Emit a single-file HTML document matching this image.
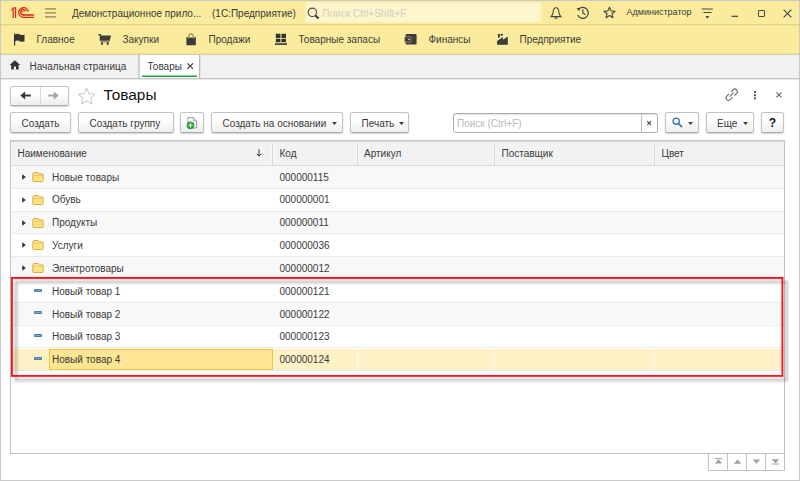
<!DOCTYPE html>
<html lang="ru"><head><meta charset="utf-8"><title>Товары</title>
<style>
*{box-sizing:border-box;margin:0;padding:0}
html,body{width:800px;height:481px;overflow:hidden;background:#fff}
body{font-family:"Liberation Sans",Arial,sans-serif;font-size:10px;color:#3a3a3a;position:relative}
.abs{position:absolute}
svg{position:absolute;overflow:visible}
#frame{position:absolute;left:0;top:0;width:800px;height:481px;border:1px solid #c9c9c9;z-index:50;pointer-events:none}
#top{left:0;top:0;width:800px;height:25px;background:#fbec9d;border-bottom:1px solid #e3d37f}
#sec{left:0;top:25px;width:800px;height:30px;background:#fbec9d;border-top:1px solid #f5e696;border-bottom:1px solid #d9cf98;box-shadow:inset 0 -1px 0 #f2e291}
#tabs{left:0;top:55px;width:800px;height:25px;background:#f1f1f1;border-bottom:1px solid #e6e6e6;box-shadow:inset 0 -1px 0 #c6c6c6}
.t{position:absolute;white-space:nowrap;line-height:14px}
#search{left:304px;top:2px;width:237px;height:20.5px;background:#fdf5cb;border-radius:2px}
.btn{position:absolute;height:21px;border:1px solid #c4c4c4;border-bottom-color:#ababab;border-radius:2.5px;background:linear-gradient(#ffffff 35%,#ededed);box-shadow:0 1px 1.5px rgba(0,0,0,.18)}
.caret{position:absolute;width:0;height:0;border-left:2.5px solid transparent;border-right:2.5px solid transparent;border-top:3px solid #444}
#tbl{left:10px;top:140px;width:775px;height:314px;border:1px solid #c2c2c2;border-top-color:#c8c8c8;background:#fff;overflow:hidden}
.hd{position:absolute;left:0;top:0;width:773px;height:24.5px;background:#f2f2f2;border-top:1px solid #d4d4d4;border-bottom:1px solid #dadada}
.vs{position:absolute;top:2px;width:1px;height:22px;background:#d6d6d6;box-shadow:1px 0 0 #f8f8f8,-1px 0 0 #f8f8f8}
.sep{position:absolute;left:11px;width:773px;height:1px;background:#ebebeb}
.alt{position:absolute;left:11px;width:773px;background:#f8f8f8}
</style></head><body>
<div id="top" class="abs"></div>
<div id="sec" class="abs"></div>
<div id="tabs" class="abs"></div>
<!-- top bar -->
<svg style="left:10px;top:6px" width="25" height="13" viewBox="0 0 25 13"><g fill="none" stroke="#e0251b" stroke-width="1.25"><path d="M1.3 4.3 L3.7 1.75 H5.55 V12.1"/><path d="M3.25 3.4 V12.1"/><path d="M18.36 5.62 A4.85 4.85 0 1 0 13.6 11.4 H24" stroke-width="1.35"/><path d="M16.27 5.16 A2.95 2.7 0 1 0 13.6 9 H24" stroke-width="1.3"/><path d="M14.7 5.7 A1.2 1.2 0 0 0 12.4 6.5" stroke-width="0.8"/></g></svg>
<svg style="left:45px;top:8px" width="11" height="10" viewBox="0 0 11 10"><g stroke="#8a8258" stroke-width="1.3"><path d="M0 0.8H11M0 4.9H11M0 8.8H11"/></g></svg>
<div class="t" style="left:72px;top:6.7px;">Демонстрационное прило...</div>
<div class="t" style="left:212px;top:6.7px;">(1С:Предприятие)</div>
<svg style="left:300px;top:0px" width="245" height="25" viewBox="0 0 245 25"><rect x="5.2" y="2.5" width="236" height="20" rx="2" fill="#fdf5cb"/></svg>
<svg style="left:306.6px;top:6.6px" width="13" height="13" viewBox="0 0 13 13"><circle cx="5.3" cy="5.3" r="4.2" fill="none" stroke="#444" stroke-width="1.1"/><path d="M8.5 8.5 L11.5 11.5" stroke="#333" stroke-width="1.9"/></svg>
<div class="t" style="left:322.3px;top:6.7px;color:#d3cfc0">Поиск Ctrl+Shift+F</div>
<svg style="left:550.2px;top:6.8px" width="12" height="12.5" viewBox="0 0 12 12" preserveAspectRatio="none"><path d="M6 0.7 C3.6 0.7 3.2 3 3.1 5.2 C3 7.2 2 8.2 0.9 9.3 H11.1 C10 8.2 9 7.2 8.9 5.2 C8.8 3 8.4 0.7 6 0.7 Z" fill="none" stroke="#444" stroke-width="1.1" stroke-linejoin="round"/><path d="M4.6 10.6 H7.4" stroke="#444" stroke-width="1.3"/></svg>
<svg style="left:576.1px;top:6.4px" width="13.2" height="13.2" viewBox="0 0 12 12"><path d="M2.2 3.2 A5 5 0 1 1 1.6 8.2" fill="none" stroke="#444" stroke-width="1.1"/><path d="M0.4 2.2 L3.6 1.6 L3 4.8 Z" fill="#444"/><path d="M6.2 3 V6.4 L8.6 8" fill="none" stroke="#444" stroke-width="1.1"/></svg>
<svg style="left:603.3px;top:5.9px" width="13" height="13" viewBox="0 0 24 24"><path d="M12 2.2 L14.9 9 L22.2 9.6 L16.6 14.4 L18.4 21.6 L12 17.7 L5.6 21.6 L7.4 14.4 L1.8 9.6 L9.1 9 Z" fill="none" stroke="#444" stroke-width="2.1" stroke-linejoin="round"/></svg>
<div class="t" style="left:626.5px;top:4.5px;font-size:9px">Администратор</div>
<svg style="left:701px;top:8px" width="13" height="11" viewBox="0 0 13 11"><path d="M0.8 1H11.8M2.4 4.5H10.4" stroke="#444" stroke-width="1.2"/><path d="M4.4 8.2 H8.4 L6.4 10.6 Z" fill="#222"/></svg>
<svg style="left:731px;top:15px" width="8" height="3" viewBox="0 0 8 3"><path d="M0.5 1.3H7" stroke="#444" stroke-width="1.2"/></svg>
<div class="abs" style="left:757.5px;top:9.5px;width:7.5px;height:7.5px;border:1.2px solid #444;border-radius:1px"></div>
<svg style="left:783px;top:9px" width="9" height="9" viewBox="0 0 9 9"><path d="M0.6 0.6 L8.4 8.4 M8.4 0.6 L0.6 8.4" stroke="#444" stroke-width="1.1"/></svg>
<!-- sections -->
<svg style="left:14px;top:33px" width="11" height="13" viewBox="0 0 11 13"><path d="M0.6 0.5 V12.6" stroke="#333" stroke-width="1.2"/><path d="M1 1.5 C3 0.5 4.6 0.7 6 1.5 C7.4 2.3 8.8 2.3 10.5 1.5 V8.2 C8.8 9 7.4 9 6 8.2 C4.6 7.4 3 7.2 1 8.2 Z" fill="#353535"/></svg>
<div class="t" style="left:36.5px;top:32.6px;">Главное</div>
<svg style="left:98px;top:34px" width="13.2" height="11" viewBox="0 0 13.2 11"><path d="M0.3 0.6 H2.2 V2" fill="none" stroke="#3a3a3a" stroke-width="1.2"/><path d="M1.7 1.5 H13 L11.7 6.8 H1.7 Z" fill="#3d3d3d"/><path d="M2.6 7.8 H11.7" stroke="#3d3d3d" stroke-width="0.7"/><path d="M3.1 8.3 H5 V10.7 H3.1 Z M8.8 8.3 H10.7 V10.7 H8.8 Z" fill="#3d3d3d"/></svg>
<div class="t" style="left:122.5px;top:32.6px;">Закупки</div>
<svg style="left:185.5px;top:32.5px" width="10.5" height="12.5" viewBox="0 0 10.5 12.5"><path d="M0.4 3.6 L1.3 4.6 H8.9 L9.8 3.6 V12.2 H0.4 Z" fill="#3a3a3a"/><path d="M2.9 6 V3.2 C2.9 0.1 7.3 0.1 7.3 3.2 V6" fill="none" stroke="#8f8759" stroke-width="1.15"/></svg>
<div class="t" style="left:208.5px;top:32.6px;">Продажи</div>
<svg style="left:275px;top:34px" width="12" height="11" viewBox="0 0 12 11"><path d="M0.8 -0.2 H5.4 V3.9 H0.8 Z M6.4 -0.2 H11 V3.9 H6.4 Z M0.8 4.8 H5.4 V8.3 H0.8 Z M6.4 4.8 H11 V8.3 H6.4 Z" fill="#333"/><path d="M0 10.1 H12" stroke="#333" stroke-width="1.6"/></svg>
<div class="t" style="left:298.5px;top:32.6px;">Товарные запасы</div>
<svg style="left:403.8px;top:34px" width="13" height="11" viewBox="0 0 13 11"><rect x="1.6" y="0" width="11" height="10.6" rx="1.2" fill="#3d3d3d"/><rect x="0.6" y="2.8" width="6.6" height="5.4" rx="1.3" fill="#3d3d3d" stroke="#b5ab6c" stroke-width="0.7"/><circle cx="4.9" cy="5.5" r="0.75" fill="#f4e9b0"/></svg>
<div class="t" style="left:428.5px;top:32.6px;">Финансы</div>
<svg style="left:497px;top:34px" width="11" height="11" viewBox="0 0 11 11"><path d="M0.1 10.7 V6.9 L5.9 3 V5.8 L10.8 2.6 V10.7 Z" fill="#3d3d3d"/><path d="M1 0 H2.8 V2.9 L1 4.1 Z M3.8 0 H6 V0.9 L3.8 2.3 Z" fill="#2e2e2e"/></svg>
<div class="t" style="left:519.5px;top:32.6px;">Предприятие</div>
<!-- tabs -->
<div class="abs" style="left:138px;top:55px;width:2px;height:23px;background:#cfcfcf"></div>
<div class="abs" style="left:140px;top:55px;width:59px;height:23px;background:#fff"></div>
<div class="abs" style="left:199px;top:55px;width:1px;height:23px;background:#b6b6b6"></div>
<div class="abs" style="left:200px;top:55px;width:1px;height:23px;background:#e2e2e2"></div>
<svg style="left:141px;top:74px" width="58" height="5" viewBox="0 0 58 5"><rect x="0.8" y="1.5" width="55.4" height="1.6" rx="0.8" fill="#1f9f44"/></svg>
<svg style="left:8.6px;top:60.4px" width="11.8" height="10" viewBox="0 0 11 10"><path d="M5.5 0.3 L10.8 5 H9.2 V9.6 H6.6 V6.4 H4.4 V9.6 H1.8 V5 H0.2 Z" fill="#333"/></svg>
<div class="t" style="left:29.5px;top:60.4px;">Начальная страница</div>
<div class="t" style="left:147.5px;top:60.4px;">Товары</div>
<svg style="left:186.6px;top:63.3px" width="6.4" height="6.4" viewBox="0 0 6 6"><path d="M0.4 0.4 L5.6 5.6 M5.6 0.4 L0.4 5.6" stroke="#333" stroke-width="1.05"/></svg>
<!-- title row -->
<div class="btn" style="left:10px;top:86px;width:59px;height:19.5px"></div>
<div class="abs" style="left:39.5px;top:87px;width:1px;height:17px;background:#d8d8d8"></div>
<svg style="left:20px;top:91px" width="11" height="9" viewBox="0 0 11 9"><path d="M10.8 4.5 H4" fill="none" stroke="#3a3a3a" stroke-width="2"/><path d="M0.2 4.5 L5.2 0.4 V8.6 Z" fill="#3a3a3a"/></svg>
<svg style="left:48px;top:91px" width="11" height="9" viewBox="0 0 11 9"><path d="M0.2 4.5 H7" fill="none" stroke="#a6a6a6" stroke-width="2"/><path d="M10.8 4.5 L5.8 0.4 V8.6 Z" fill="#a6a6a6"/></svg>
<svg style="left:76.6px;top:86.8px" width="19.4" height="17.8" viewBox="0 0 24 22"><path d="M12 1.2 L14.9 8.2 L22.6 8.8 L16.7 13.7 L18.6 21 L12 17 L5.4 21 L7.3 13.7 L1.4 8.8 L9.1 8.2 Z" fill="#fff" stroke="#bcc3cb" stroke-width="1.2" stroke-linejoin="miter"/></svg>
<div class="t" style="left:103.5px;top:84.6px;font-size:15.4px;line-height:20px;color:#111">Товары</div>
<svg style="left:725.6px;top:89px" width="11.4" height="11.4" viewBox="-6.25 -6.25 12.5 12.5"><g transform="rotate(-45)" fill="none" stroke="#6a6a6a" stroke-width="1.15" stroke-linecap="round"><path d="M-1.8 -2.7 H-4.9 A2.7 2.7 0 0 0 -4.9 2.7 H-1.8"/><path d="M1.8 2.7 H4.9 A2.7 2.7 0 0 0 4.9 -2.7 H1.8"/><path d="M-2.7 0 H2.7"/></g></svg>
<div class="abs" style="left:754px;top:90.5px;width:2px;height:2px;background:#555;box-shadow:0 3.2px 0 #555,0 6.4px 0 #555"></div>
<svg style="left:775.6px;top:91.9px" width="5.8" height="5.8" viewBox="0 0 6 6"><path d="M0.4 0.4 L5.6 5.6 M5.6 0.4 L0.4 5.6" stroke="#666" stroke-width="1.15"/></svg>
<!-- command bar -->
<div class="btn" style="left:10px;top:112px;width:61px"></div>
<div class="t" style="left:21.5px;top:117.2px;">Создать</div>
<div class="btn" style="left:78px;top:112px;width:95.5px"></div>
<div class="t" style="left:89.5px;top:117.2px;">Создать группу</div>
<div class="btn" style="left:180px;top:112px;width:23.5px"></div>
<svg style="left:186.9px;top:117px" width="10.5" height="12" viewBox="0 0 10.5 12"><path d="M0.9 0.6 H6.3 L9.6 3.8 V10.9 H0.9 Z" fill="#fff" stroke="#8593a6" stroke-width="0.9"/><path d="M6.3 0.6 V3.8 H9.6" fill="none" stroke="#8593a6" stroke-width="0.8"/><circle cx="3.5" cy="8.3" r="3.6" fill="#2aa73a" stroke="#1f8f2e" stroke-width="0.5"/><path d="M3.5 6.2 V10.4 M1.4 8.3 H5.6" stroke="#fff" stroke-width="1.1"/></svg>
<div class="btn" style="left:211px;top:112px;width:131.5px"></div>
<div class="t" style="left:222.5px;top:117.2px;">Создать на основании</div>
<svg style="left:331.8px;top:122.1px" width="5" height="3" viewBox="0 0 5 3"><path d="M0.1 0.1 H4.9 L2.5 2.9 Z" fill="#3c3c3c"/></svg>
<div class="btn" style="left:350px;top:112px;width:59px"></div>
<div class="t" style="left:361.5px;top:117.2px;">Печать</div>
<svg style="left:398.5px;top:122.1px" width="5" height="3" viewBox="0 0 5 3"><path d="M0.1 0.1 H4.9 L2.5 2.9 Z" fill="#3c3c3c"/></svg>
<div class="abs" style="left:453px;top:113px;width:205px;height:20px;border:1px solid #ababab;border-radius:2.5px;background:#fff;box-shadow:inset 0 1px 1px rgba(0,0,0,.10)"></div>
<div class="abs" style="left:641px;top:114px;width:1px;height:18px;background:#bdbdbd"></div>
<div class="t" style="left:457px;top:117.2px;color:#b9b9b9">Поиск (Ctrl+F)</div>
<svg style="left:647.2px;top:120.6px" width="4.4" height="4.4" viewBox="0 0 5 5"><path d="M0.3 0.3 L4.7 4.7 M4.7 0.3 L0.3 4.7" stroke="#555" stroke-width="1.3"/></svg>
<div class="btn" style="left:665px;top:112px;width:33.5px"></div>
<svg style="left:688.2px;top:122.1px" width="5" height="3" viewBox="0 0 5 3"><path d="M0.1 0.1 H4.9 L2.5 2.9 Z" fill="#3c3c3c"/></svg>
<svg style="left:672.2px;top:117.4px" width="11" height="11" viewBox="0 0 11 11"><circle cx="4.2" cy="4.2" r="3.1" fill="none" stroke="#2c74ac" stroke-width="1.25"/><path d="M6.5 6.5 L9.6 9.6" stroke="#2c74ac" stroke-width="1.6" stroke-linecap="round"/></svg>
<div class="btn" style="left:706px;top:112px;width:47.5px"></div>
<div class="t" style="left:717px;top:117.2px;">Еще</div>
<svg style="left:743.2px;top:122.1px" width="5" height="3" viewBox="0 0 5 3"><path d="M0.1 0.1 H4.9 L2.5 2.9 Z" fill="#3c3c3c"/></svg>
<div class="btn" style="left:761px;top:112px;width:23px"></div>
<div class="t" style="left:768.8px;top:117.2px;font-weight:bold;font-size:12px;color:#111;top:116.4px">?</div>
<!-- table -->
<div id="tbl" class="abs"><div class="hd"></div>
<div class="vs" style="left:261px"></div>
<div class="vs" style="left:346px"></div>
<div class="vs" style="left:483px"></div>
<div class="vs" style="left:643px"></div>
</div>
<div class="t" style="left:17.5px;top:146.5px;">Наименование</div>
<div class="t" style="left:279.5px;top:146.5px;">Код</div>
<div class="t" style="left:364px;top:146.5px;">Артикул</div>
<div class="t" style="left:501.5px;top:146.5px;">Поставщик</div>
<div class="t" style="left:661.5px;top:146.5px;">Цвет</div>
<svg style="left:256px;top:149px" width="6" height="8" viewBox="0 0 6 8"><path d="M3 0.4 V7 M0.8 4.8 L3 7.2 L5.2 4.8" fill="none" stroke="#333" stroke-width="1"/></svg>
<div class="alt" style="top:165.50px;height:22.75px"></div>
<div class="sep" style="top:187.75px"></div>
<svg style="left:22px;top:174.03px" width="4" height="6" viewBox="0 0 4 6"><path d="M0.2 0.2 L3.8 3 L0.2 5.8 Z" fill="#333"/></svg>
<svg style="left:32px;top:172.03px" width="12" height="10" viewBox="0 0 12 10"><path d="M0.75 8.7 V2.4 L1.7 0.5 H6.1 L7.3 1.9 H10.3 C10.9 1.9 11.25 2.3 11.25 2.8 V8.7 C11.25 9.2 10.9 9.5 10.3 9.5 H1.7 C1.1 9.5 0.75 9.2 0.75 8.7 Z" fill="#fde98c" stroke="#dba339" stroke-width="0.9" stroke-linejoin="round"/><path d="M1.2 3.3 H10.8" stroke="#e8b94e" stroke-width="0.7"/><path d="M1.3 5 H10.7 M1.3 6.5 H10.7 M1.3 8 H10.7" stroke="#f5d46a" stroke-width="0.5"/></svg>
<div class="t" style="left:52px;top:171px;">Новые товары</div>
<div class="t" style="left:279.5px;top:171px;">000000115</div>
<div class="sep" style="top:210.75px"></div>
<svg style="left:22px;top:197.15px" width="4" height="6" viewBox="0 0 4 6"><path d="M0.2 0.2 L3.8 3 L0.2 5.8 Z" fill="#333"/></svg>
<svg style="left:32px;top:195.15px" width="12" height="10" viewBox="0 0 12 10"><path d="M0.75 8.7 V2.4 L1.7 0.5 H6.1 L7.3 1.9 H10.3 C10.9 1.9 11.25 2.3 11.25 2.8 V8.7 C11.25 9.2 10.9 9.5 10.3 9.5 H1.7 C1.1 9.5 0.75 9.2 0.75 8.7 Z" fill="#fde98c" stroke="#dba339" stroke-width="0.9" stroke-linejoin="round"/><path d="M1.2 3.3 H10.8" stroke="#e8b94e" stroke-width="0.7"/><path d="M1.3 5 H10.7 M1.3 6.5 H10.7 M1.3 8 H10.7" stroke="#f5d46a" stroke-width="0.5"/></svg>
<div class="t" style="left:52px;top:193px;">Обувь</div>
<div class="t" style="left:279.5px;top:193px;">000000001</div>
<div class="alt" style="top:211.75px;height:22.00px"></div>
<div class="sep" style="top:233.25px"></div>
<svg style="left:22px;top:219.90px" width="4" height="6" viewBox="0 0 4 6"><path d="M0.2 0.2 L3.8 3 L0.2 5.8 Z" fill="#333"/></svg>
<svg style="left:32px;top:217.90px" width="12" height="10" viewBox="0 0 12 10"><path d="M0.75 8.7 V2.4 L1.7 0.5 H6.1 L7.3 1.9 H10.3 C10.9 1.9 11.25 2.3 11.25 2.8 V8.7 C11.25 9.2 10.9 9.5 10.3 9.5 H1.7 C1.1 9.5 0.75 9.2 0.75 8.7 Z" fill="#fde98c" stroke="#dba339" stroke-width="0.9" stroke-linejoin="round"/><path d="M1.2 3.3 H10.8" stroke="#e8b94e" stroke-width="0.7"/><path d="M1.3 5 H10.7 M1.3 6.5 H10.7 M1.3 8 H10.7" stroke="#f5d46a" stroke-width="0.5"/></svg>
<div class="t" style="left:52px;top:216px;">Продукты</div>
<div class="t" style="left:279.5px;top:216px;">000000011</div>
<div class="sep" style="top:255.75px"></div>
<svg style="left:22px;top:242.40px" width="4" height="6" viewBox="0 0 4 6"><path d="M0.2 0.2 L3.8 3 L0.2 5.8 Z" fill="#333"/></svg>
<svg style="left:32px;top:240.40px" width="12" height="10" viewBox="0 0 12 10"><path d="M0.75 8.7 V2.4 L1.7 0.5 H6.1 L7.3 1.9 H10.3 C10.9 1.9 11.25 2.3 11.25 2.8 V8.7 C11.25 9.2 10.9 9.5 10.3 9.5 H1.7 C1.1 9.5 0.75 9.2 0.75 8.7 Z" fill="#fde98c" stroke="#dba339" stroke-width="0.9" stroke-linejoin="round"/><path d="M1.2 3.3 H10.8" stroke="#e8b94e" stroke-width="0.7"/><path d="M1.3 5 H10.7 M1.3 6.5 H10.7 M1.3 8 H10.7" stroke="#f5d46a" stroke-width="0.5"/></svg>
<div class="t" style="left:52px;top:239px;">Услуги</div>
<div class="t" style="left:279.5px;top:239px;">000000036</div>
<div class="alt" style="top:256.75px;height:22.50px"></div>
<div class="sep" style="top:278.75px"></div>
<svg style="left:22px;top:265.15px" width="4" height="6" viewBox="0 0 4 6"><path d="M0.2 0.2 L3.8 3 L0.2 5.8 Z" fill="#333"/></svg>
<svg style="left:32px;top:263.15px" width="12" height="10" viewBox="0 0 12 10"><path d="M0.75 8.7 V2.4 L1.7 0.5 H6.1 L7.3 1.9 H10.3 C10.9 1.9 11.25 2.3 11.25 2.8 V8.7 C11.25 9.2 10.9 9.5 10.3 9.5 H1.7 C1.1 9.5 0.75 9.2 0.75 8.7 Z" fill="#fde98c" stroke="#dba339" stroke-width="0.9" stroke-linejoin="round"/><path d="M1.2 3.3 H10.8" stroke="#e8b94e" stroke-width="0.7"/><path d="M1.3 5 H10.7 M1.3 6.5 H10.7 M1.3 8 H10.7" stroke="#f5d46a" stroke-width="0.5"/></svg>
<div class="t" style="left:52px;top:262px;">Электротовары</div>
<div class="t" style="left:279.5px;top:262px;">000000012</div>
<div class="sep" style="top:302.00px"></div>
<div class="abs" style="left:34.2px;top:288.60px;width:7.9px;height:3.3px;border-radius:0.8px;background:#74a3cf;border:0.8px solid #4f7fab"></div>
<div class="t" style="left:52px;top:285px;">Новый товар 1</div>
<div class="t" style="left:279.5px;top:285px;">000000121</div>
<div class="alt" style="top:303.00px;height:22.00px"></div>
<div class="sep" style="top:324.50px"></div>
<div class="abs" style="left:34.2px;top:311.10px;width:7.9px;height:3.3px;border-radius:0.8px;background:#74a3cf;border:0.8px solid #4f7fab"></div>
<div class="t" style="left:52px;top:308px;">Новый товар 2</div>
<div class="t" style="left:279.5px;top:308px;">000000122</div>
<div class="sep" style="top:347.00px"></div>
<div class="abs" style="left:34.2px;top:333.60px;width:7.9px;height:3.3px;border-radius:0.8px;background:#74a3cf;border:0.8px solid #4f7fab"></div>
<div class="t" style="left:52px;top:330px;">Новый товар 3</div>
<div class="t" style="left:279.5px;top:330px;">000000123</div>
<div class="abs" style="left:13px;top:349.30px;width:767.6px;height:20.55px;background:#fdf1c5"></div>
<div class="abs" style="left:357px;top:349.30px;width:1px;height:20.55px;background:#fffaf0"></div>
<div class="abs" style="left:494px;top:349.30px;width:1px;height:20.55px;background:#fffaf0"></div>
<div class="abs" style="left:654px;top:349.30px;width:1px;height:20.55px;background:#fffaf0"></div>
<div class="abs" style="left:49px;top:349.30px;width:223.5px;height:20.55px;background:#fde591;border:1px solid #f5c440"></div>
<div class="sep" style="top:369.75px"></div>
<div class="abs" style="left:34.2px;top:356.85px;width:7.9px;height:3.3px;border-radius:0.8px;background:#74a3cf;border:0.8px solid #4f7fab"></div>
<div class="t" style="left:52px;top:353px;">Новый товар 4</div>
<div class="t" style="left:279.5px;top:353px;">000000124</div>
<svg style="left:0;top:270px;filter:drop-shadow(4px 4px 1.7px rgba(0,0,0,.34))" width="800" height="115" viewBox="0 270 800 115"><rect x="11.9" y="277.9" width="770.5" height="98" fill="none" stroke="#f5141c" stroke-width="1.9"/></svg>
<div class="abs" style="left:708px;top:453px;width:77px;height:17.5px;border:1px solid #c2c2c2;background:#fff"></div>
<div class="abs" style="left:727px;top:454px;width:1px;height:16px;background:#c2c2c2"></div>
<div class="abs" style="left:746px;top:454px;width:1px;height:16px;background:#c2c2c2"></div>
<div class="abs" style="left:765px;top:454px;width:1px;height:16px;background:#c2c2c2"></div>
<svg style="left:713.5px;top:458px" width="9" height="7" viewBox="0 0 9 7"><path d="M0.8 0.6 H8.2" stroke="#a0a0a0" stroke-width="1"/><path d="M4.5 1.2 L8.2 5.4 H0.8 Z" fill="#a0a0a0"/></svg>
<svg style="left:732.5px;top:459px" width="9" height="6" viewBox="0 0 9 6"><path d="M4.5 0.6 L8.2 4.8 H0.8 Z" fill="#a0a0a0"/></svg>
<svg style="left:751.5px;top:459px" width="9" height="6" viewBox="0 0 9 6"><path d="M4.5 4.8 L8.2 0.6 H0.8 Z" fill="#a0a0a0"/></svg>
<svg style="left:770.5px;top:458px" width="9" height="7" viewBox="0 0 9 7"><path d="M0.8 6 H8.2" stroke="#a0a0a0" stroke-width="1"/><path d="M4.5 5.4 L8.2 1.2 H0.8 Z" fill="#a0a0a0"/></svg>
<div id="frame"></div>
</body></html>
